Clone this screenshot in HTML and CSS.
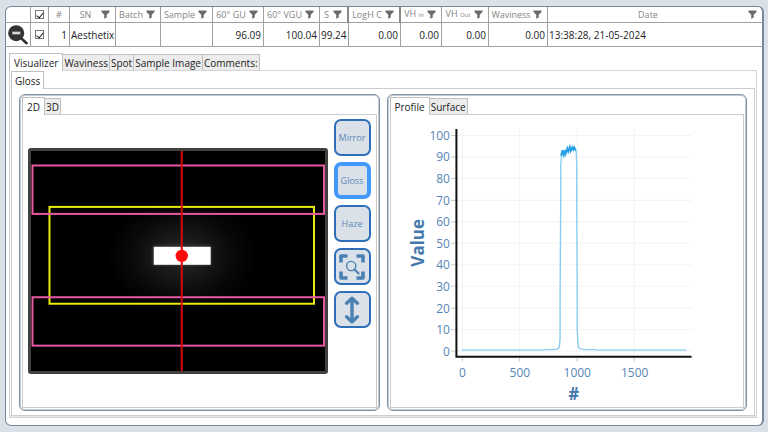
FILE: index.html
```html
<!DOCTYPE html>
<html lang="en">
<head>
<meta charset="utf-8">
<title>Visualizer</title>
<link rel="stylesheet" href="styles.css">
</head>
<body>
<svg class="defs" aria-hidden="true">
  <symbol id="funnel" viewBox="0 0 10 10"><path d="M0.5 0.5h9v1.6L6.4 5.4v3L3.6 9.6V5.4L0.5 2.1z"/></symbol>
</svg>
<main class="window">
  <table class="records">
    <colgroup>
      <col class="c-icon"><col class="c-check"><col class="c-num"><col class="c-sn"><col class="c-batch"><col class="c-sample"><col class="c-gu"><col class="c-vgu"><col class="c-s"><col class="c-log"><col class="c-vhin"><col class="c-vhout"><col class="c-wav"><col>
    </colgroup>
    <thead>
      <tr>
        <th></th>
        <th><input type="checkbox" checked aria-label="Select all"></th>
        <th>#</th>
        <th><div class="head"><span>SN</span><svg class="funnel"><use href="#funnel"/></svg></div></th>
        <th><div class="head"><span>Batch</span><svg class="funnel"><use href="#funnel"/></svg></div></th>
        <th><div class="head"><span>Sample</span><svg class="funnel"><use href="#funnel"/></svg></div></th>
        <th><div class="head"><span>60° GU</span><svg class="funnel"><use href="#funnel"/></svg></div></th>
        <th><div class="head"><span>60° VGU</span><svg class="funnel"><use href="#funnel"/></svg></div></th>
        <th class="thick"><div class="head"><span>S</span><svg class="funnel"><use href="#funnel"/></svg></div></th>
        <th class="thick"><div class="head"><span>LogH C</span><svg class="funnel"><use href="#funnel"/></svg></div></th>
        <th><div class="head"><span>VH <small>In</small></span><svg class="funnel"><use href="#funnel"/></svg></div></th>
        <th><div class="head"><span>VH <small>Out</small></span><svg class="funnel"><use href="#funnel"/></svg></div></th>
        <th><div class="head"><span>Waviness</span><svg class="funnel"><use href="#funnel"/></svg></div></th>
        <th><div class="head"><span>Date</span><svg class="funnel"><use href="#funnel"/></svg></div></th>
      </tr>
    </thead>
    <tbody>
      <tr>
        <td><button class="zoom-out" aria-label="Zoom out"><svg viewBox="0 0 20 20"><circle cx="8.2" cy="8.2" r="8" fill="#333"/><path d="M13.2 13.2l5.4 5" stroke="#333" stroke-width="2.6" stroke-linecap="round"/><rect x="4.2" y="6.8" width="8" height="2.4" fill="#ddd" stroke="#888" stroke-width=".5"/></svg></button></td>
        <td class="mid"><input type="checkbox" checked aria-label="Select row 1"></td>
        <td class="num">1</td>
        <td>Aesthetix</td>
        <td></td>
        <td></td>
        <td class="num">96.09</td>
        <td class="num">100.04</td>
        <td class="num">99.24</td>
        <td class="num">0.00</td>
        <td class="num">0.00</td>
        <td class="num">0.00</td>
        <td class="num">0.00</td>
        <td>13:38:28, 21-05-2024</td>
      </tr>
    </tbody>
  </table>

  <section class="views">
    <div class="tabs" role="tablist">
      <button class="tab selected" role="tab" aria-selected="true">Visualizer</button>
      <button class="tab" role="tab">Waviness</button>
      <button class="tab" role="tab">Spot</button>
      <button class="tab" role="tab">Sample Image</button>
      <button class="tab" role="tab">Comments:</button>
    </div>
    <div class="page outer">
      <div class="tabs" role="tablist">
        <button class="tab selected" role="tab" aria-selected="true">Gloss</button>
      </div>
      <div class="page panels">
        <section class="panel">
          <div class="tabs" role="tablist">
            <button class="tab selected" role="tab" aria-selected="true">2D</button>
            <button class="tab" role="tab">3D</button>
          </div>
          <div class="page capture">
            <svg class="image" viewBox="0 0 294 221" role="img" aria-label="Gloss image">
              <defs>
                <radialGradient id="glow"><stop offset="0" stop-color="#2a2a2a"/><stop offset=".4" stop-color="#161616"/><stop offset=".7" stop-color="#080808"/><stop offset="1" stop-color="#000"/></radialGradient>
                <filter id="soft" x="-20%" y="-40%" width="140%" height="180%"><feGaussianBlur stdDeviation="1.5"/></filter>
              </defs>
              <rect width="294" height="221" fill="#000"/>
              <ellipse cx="151" cy="105" rx="76" ry="60" fill="url(#glow)"/>
              <rect x="122" y="95" width="58" height="19" fill="#444" filter="url(#soft)"/>
              <rect x="123" y="96" width="57" height="18" fill="#fff"/>
              <g fill="none" stroke-width="2">
                <rect x="18.500" y="56" width="265" height="97" stroke="#eaea10"/>
                <rect x="1.500" y="14.500" width="292" height="48.500" stroke="#ea58a4"/>
                <rect x="1.500" y="146.500" width="292" height="48.500" stroke="#ea58a4"/>
                <path d="M151 0v221" stroke="#d80808"/>
              </g>
              <circle cx="151" cy="105" r="6.200" fill="#ff0a0a"/>
            </svg>
            <div class="tools">
              <button class="tool">Mirror</button>
              <button class="tool active">Gloss</button>
              <button class="tool">Haze</button>
              <button class="tool" aria-label="Fit to view"><svg viewBox="0 0 28 28" fill="none" stroke="#4a80b4"><path d="M3 9.500V3h6.500M18.500 3H25v6.500M25 18.500V25h-6.500M9.500 25H3v-6.500" stroke-width="3.600" stroke-linejoin="round"/><circle cx="13.200" cy="13" r="4.600" stroke-width="1.400"/><path d="M16.600 16.500l4 4" stroke-width="2" stroke-linecap="round"/></svg></button>
              <button class="tool" aria-label="Fit height"><svg viewBox="0 0 28 28" fill="none" stroke="#4a80b4" stroke-linecap="round" stroke-linejoin="round"><path d="M14 3v22" stroke-width="3.400"/><path d="M8.600 7.200L14 2.200L19.400 7.200M8.600 20.800L14 25.800L19.400 20.800" stroke-width="3.400"/></svg></button>
            </div>
          </div>
        </section>
        <section class="panel">
          <div class="tabs" role="tablist">
            <button class="tab selected" role="tab" aria-selected="true">Profile</button>
            <button class="tab" role="tab">Surface</button>
          </div>
          <div class="page">
            <svg class="chart" viewBox="391 115 353 292" role="img" aria-label="Value profile">
              <path class="grid" d="M457 135.500H692M457 157H692M457 178.500H692M457 200.500H692M457 222H692M457 243.500H692M457 265H692M457 286.500H692M457 308.500H692M457 330H692M457 351.500H692M462.500 129V357M519.500 129V357M577.500 129V357M634.500 129V357"/>
              <path class="tick" d="M451 135.500h5M451 157h5M451 178.500h5M451 200.500h5M451 222h5M451 243.500h5M451 265h5M451 286.500h5M451 308.500h5M451 330h5M451 351.500h5M462.500 358v4M519.500 358v4M577.500 358v4M634.500 358v4"/>
              <path class="trace" d="M462 350.500H544L545 350H553L557 349.500L559.500 348L560.300 340V300L561 200V165L562 154L563 150"/>
              <path class="trace" d="M575.500 149L576.500 152L577 165V200L577.500 300V330L578.500 347L580 349L584 350H596L597 350.500H687"/>
              <path class="peak" d="M561.500 156L562.500 150.500L564 155L565 150L566 153.500L567.500 148.500L568.500 151.500L570 147L571 151L572.500 147.500L573.500 149.500L574.500 147.500L576 150.500"/>
              <path class="axis" d="M456.500 129V357H692"/>
              <g class="y-labels">
                <text x="450" y="140">100</text><text x="450" y="161.500">90</text><text x="450" y="183">80</text><text x="450" y="205">70</text><text x="450" y="226.500">60</text><text x="450" y="248">50</text><text x="450" y="269.500">40</text><text x="450" y="291">30</text><text x="450" y="313">20</text><text x="450" y="334.500">10</text><text x="450" y="356">0</text>
              </g>
              <g class="x-labels">
                <text x="462.500" y="377">0</text><text x="520" y="377">500</text><text x="577.500" y="377">1000</text><text x="635" y="377">1500</text>
              </g>
              <text class="title" x="574" y="400">#</text>
              <text class="title" transform="translate(424 243) rotate(-90)">Value</text>
            </svg>
          </div>
        </section>
      </div>
    </div>
  </section>
</main>
</body>
</html>
```
FILE: styles.css
```css
* { box-sizing: border-box; }

body {
  margin: 0;
  min-height: 100vh;
  padding: 6px 4px 6px 5px;
  display: flex;
  background: #dae1e9;
  color: #222;
  font: 10px/14px "Open Sans", "Noto Sans", sans-serif;
}

button { font: inherit; color: inherit; margin: 0; }

.defs { position: absolute; width: 0; height: 0; }

.window {
  flex: 1;
  min-width: 0;
  display: flex;
  flex-direction: column;
  background: #fff;
  border: 1px solid #76899b;
  border-right-width: 2px;
  border-radius: 6px;
  overflow: hidden;
}

/* Records table */
.records {
  width: 100%;
  table-layout: fixed;
  border-collapse: separate;
  border-spacing: 0;
}
.records th, .records td {
  padding: 0 2px 0 1px;
  border-right: 1px solid #a0a0a0;
  border-bottom: 1px solid #a0a0a0;
  white-space: nowrap;
  text-align: left;
}
.records tr > :last-child { border-right: 0; }
.records th {
  height: 16px;
  padding: 0;
  color: #858585;
  font-size: 9px;
  font-weight: 400;
  line-height: 14px;
  text-align: center;
}
.records .thick { border-right: 2px solid #888; }
.records td { height: 24px; }
.records .num { text-align: right; }
.records .mid { text-align: center; }
.records small { font-size: 6px; }

.c-icon { width: 25px; }
.c-check { width: 18px; }
.c-num { width: 21px; }
.c-sn { width: 46px; }
.c-batch { width: 45px; }
.c-sample { width: 52px; }
.c-gu { width: 51px; }
.c-vgu { width: 56px; }
.c-s { width: 29px; }
.c-log { width: 52px; }
.c-vhin { width: 41px; }
.c-vhout { width: 47px; }
.c-wav { width: 59px; }

.head { display: flex; align-items: center; padding-right: 5px; }
.head span { flex: 1; }
.funnel { flex: none; width: 9px; height: 9px; fill: #6c6c6c; }

input[type="checkbox"] {
  appearance: none;
  display: block;
  width: 9px;
  height: 9px;
  margin: 0 auto;
  border: 1px solid #777;
  background: #fff;
}
input[type="checkbox"]:checked::before {
  content: "";
  display: block;
  width: 3px;
  height: 6px;
  margin-left: 2px;
  border: solid #222;
  border-width: 0 1px 1px 0;
  transform: rotate(40deg);
}

.zoom-out {
  display: block;
  width: 20px;
  height: 20px;
  padding: 0;
  margin-left: 1px;
  border: 0;
  background: none;
}
.zoom-out svg { display: block; }

/* Tabs and the pages below them */
.views {
  flex: 1;
  display: flex;
  flex-direction: column;
  padding: 6px 5px 7px 3px;
}
.tabs { display: flex; align-items: flex-end; height: 18px; }
.tab {
  height: 17px;
  padding: 0 1px;
  border: 1px solid #c0c0c0;
  border-left-width: 0;
  background: #ececec;
  line-height: 14px;
  white-space: nowrap;
}
.tab.selected {
  position: relative;
  height: 18px;
  padding: 0 4px;
  border-left-width: 1px;
  border-bottom: 0;
  background: #fff;
}
.outer > .tabs > .selected { padding: 0 3px; }
.page {
  flex: 1;
  margin-top: -1px;
  border: 1px solid #ccc;
  background: #fff;
}
.outer {
  display: flex;
  flex-direction: column;
  padding: 0 1px 1px;
  border-color: #d4d4d4;
  box-shadow: inset 0 -2px #e6e6e6;
}

.panels {
  display: grid;
  grid-template-columns: 1fr 1fr;
  gap: 7px;
  padding: 5px 7px 4px;
}
.panel {
  display: flex;
  flex-direction: column;
  min-width: 0;
  padding: 2px;
  border: 1px solid #8092a3;
  border-radius: 6px;
  box-shadow: 0 0 0 1px #c3ccd5 inset;
}

.capture {
  display: flex;
  align-items: center;
  gap: 6px;
  padding: 4px 5px;
}
.image {
  flex: 1;
  min-width: 0;
  background: #000;
  border: 3px solid #404040;
  border-radius: 3px;
}
.tools {
  align-self: flex-start;
  display: flex;
  flex-direction: column;
  gap: 6px;
}
.tool {
  display: grid;
  place-items: center;
  width: 37px;
  height: 37px;
  padding: 0;
  border: 2px solid #2f6fba;
  border-radius: 7px;
  background: #dae1e9;
  color: #5c88b6;
  font-size: 9px;
}
.tool.active { border: 4px solid #4298fb; }
.tool svg { width: 28px; height: 28px; }

/* Profile chart */
.chart { display: block; width: 100%; font-size: 12px; fill: #5585b5; }
.chart path { fill: none; }
.grid { stroke: #f3f3f3; }
.tick { stroke: #c8c8c8; }
.chart .axis { stroke: #111; stroke-width: 2; }
.trace { stroke: #8bcdf2; stroke-width: 1.4; }
.peak { stroke: #2ba2e6; stroke-width: 2; }
.y-labels { text-anchor: end; }
.x-labels { text-anchor: middle; }
.title { font-size: 17px; font-weight: 700; text-anchor: middle; fill: #4478ac; }
```
